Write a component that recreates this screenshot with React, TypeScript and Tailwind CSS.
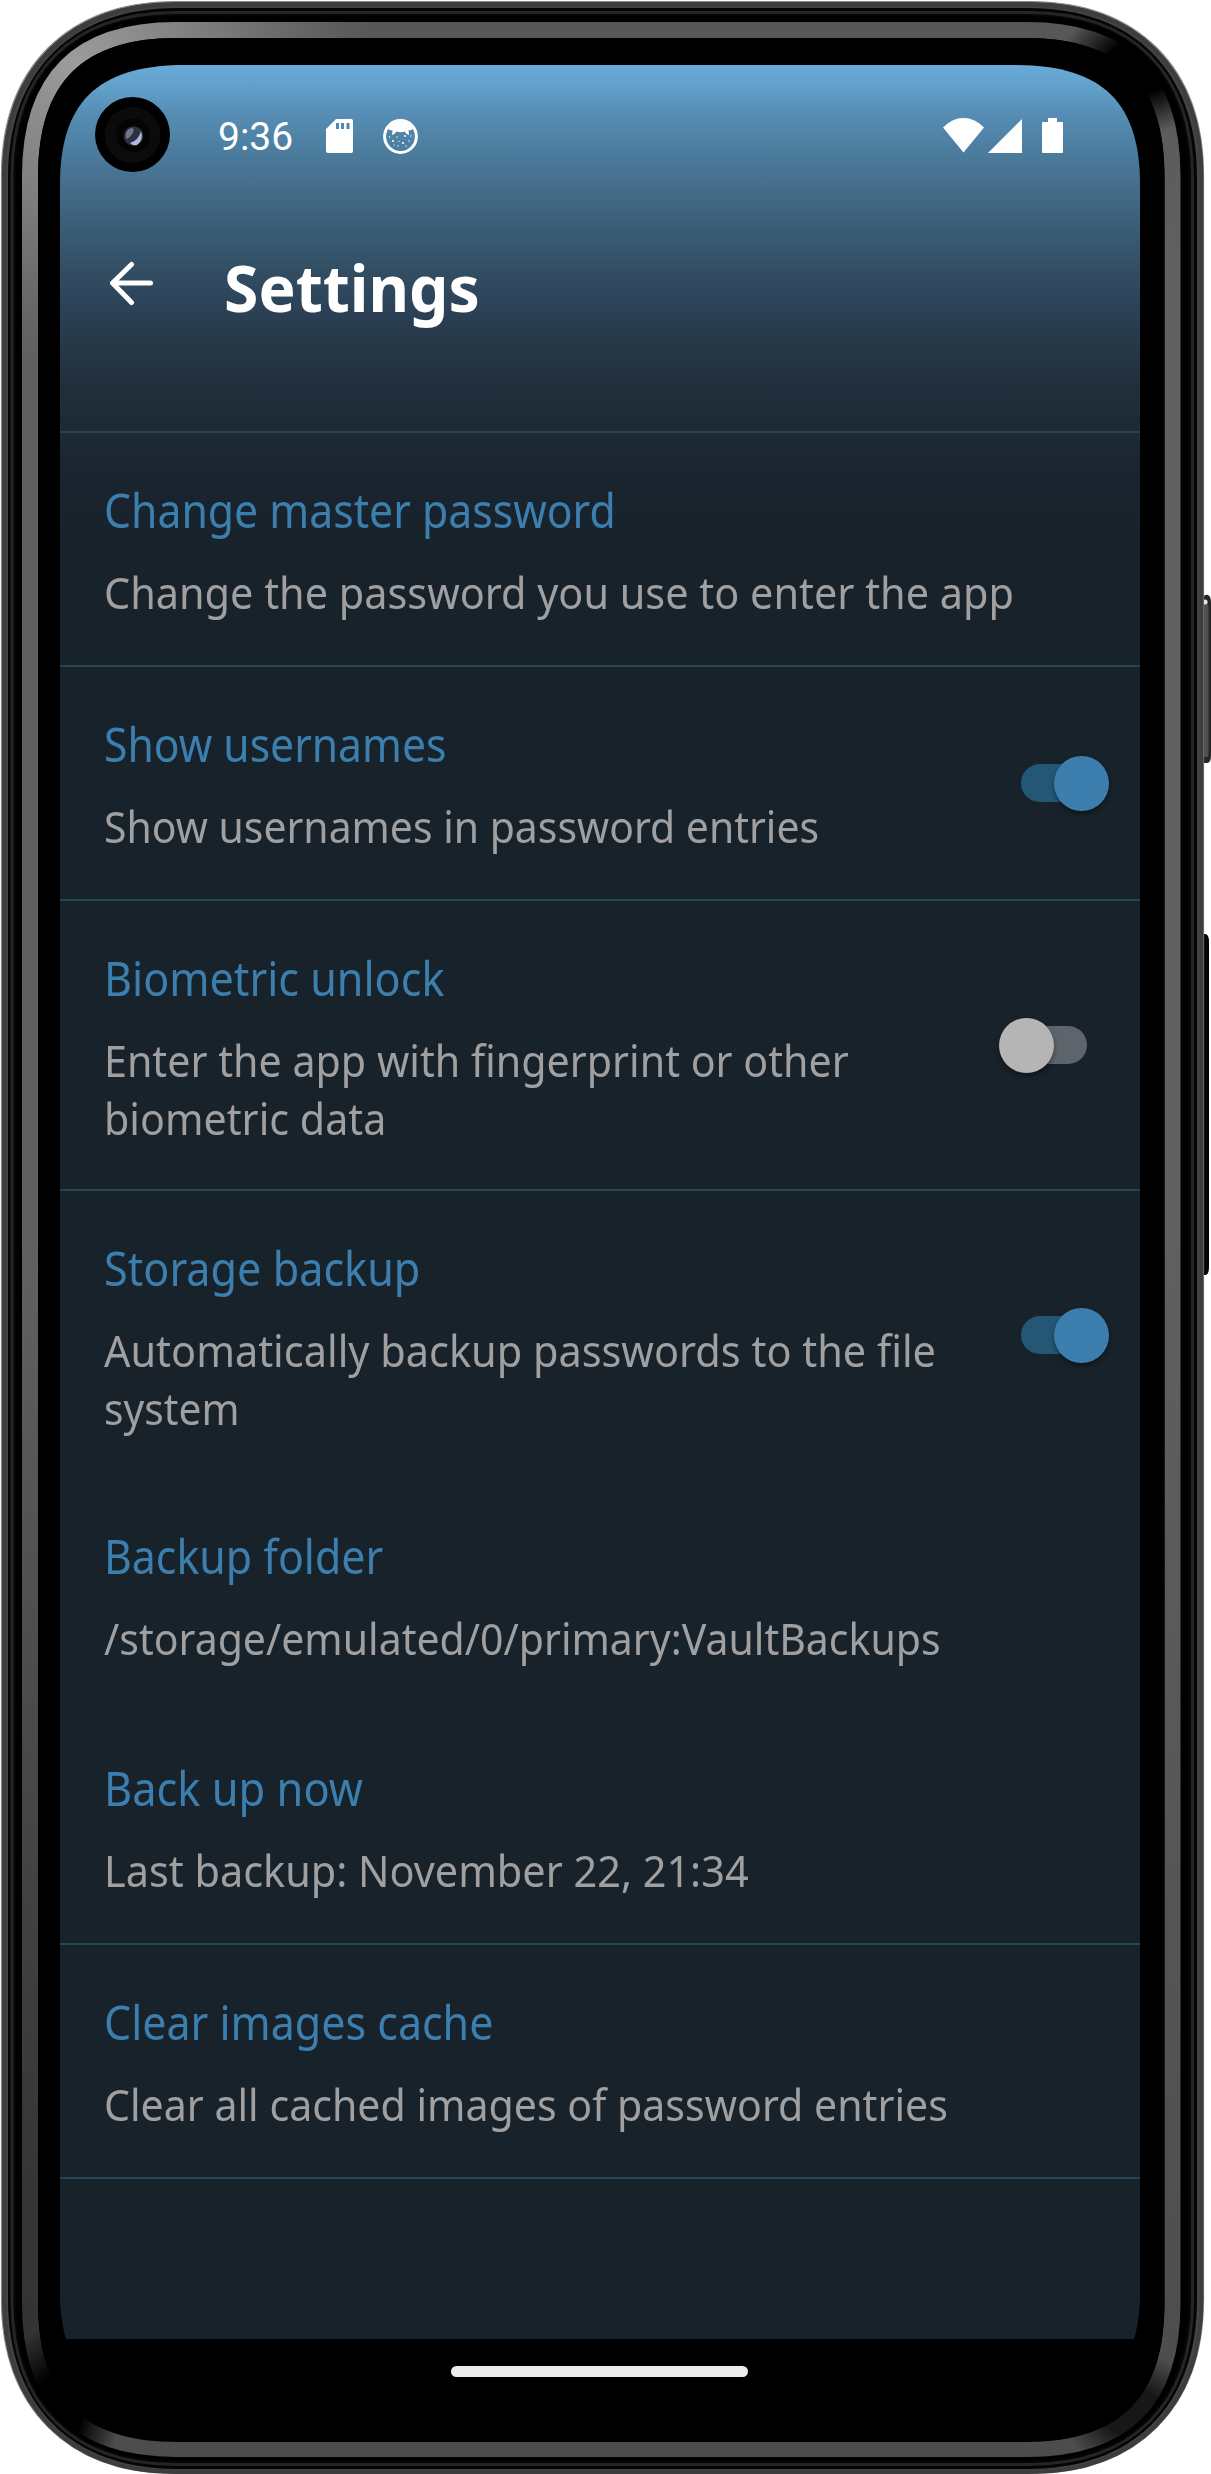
type Row = { title: string; titleScale: string; lines: { text: string; scale: string }[]; on?: boolean };

const groups: Row[][] = [
  [{ title: "Change master password", titleScale: "scale-x-[0.919]", lines: [{ text: "Change the password you use to enter the app", scale: "scale-x-[0.941]" }] }],
  [{ title: "Show usernames", titleScale: "scale-x-[0.917]", lines: [{ text: "Show usernames in password entries", scale: "scale-x-[0.930]" }], on: true }],
  [{
    title: "Biometric unlock", titleScale: "scale-x-[0.927]", on: false,
    lines: [{ text: "Enter the app with fingerprint or other", scale: "scale-x-[0.936]" }, { text: "biometric data", scale: "scale-x-[0.937]" }],
  }],
  [
    {
      title: "Storage backup", titleScale: "scale-x-[0.928]", on: true,
      lines: [{ text: "Automatically backup passwords to the file", scale: "scale-x-[0.942]" }, { text: "system", scale: "scale-x-[0.925]" }],
    },
    { title: "Backup folder", titleScale: "scale-x-[0.921]", lines: [{ text: "/storage/emulated/0/primary:VaultBackups", scale: "scale-x-[0.932]" }] },
    { title: "Back up now", titleScale: "scale-x-[0.933]", lines: [{ text: "Last backup: November 22, 21:34", scale: "scale-x-[0.941]" }] },
  ],
  [{ title: "Clear images cache", titleScale: "scale-x-[0.924]", lines: [{ text: "Clear all cached images of password entries", scale: "scale-x-[0.934]" }] }],
];

function body(l: number, t: number, r: number, b: number, c: number, f: number) {
  const k = c * f;
  return `M${l} ${t + c}C${l} ${t + k} ${l + k} ${t} ${l + c} ${t}H${r - c}C${r - k} ${t} ${r} ${t + k} ${r} ${t + c}V${b - c}C${r} ${b - k} ${r - k} ${b} ${r - c} ${b}H${l + c}C${l + k} ${b} ${l} ${b - k} ${l} ${b - c}Z`;
}

function PhoneFrame() {
  return (
    <svg className="absolute inset-0" width="1211" height="2474" viewBox="0 0 1211 2474" fill="none">
      <defs>
        <linearGradient id="ring" gradientUnits="userSpaceOnUse" x1="0" y1="0" x2="0" y2="2474">
          <stop offset="0" stopColor="#565656" />
          <stop offset="0.1" stopColor="#606060" />
          <stop offset="0.5" stopColor="#606060" />
          <stop offset="1" stopColor="#4c4c4c" />
        </linearGradient>
        <radialGradient id="glow">
          <stop offset="0" stopColor="#a0a0a0" stopOpacity="0.95" />
          <stop offset="0.5" stopColor="#909090" stopOpacity="0.6" />
          <stop offset="1" stopColor="#808080" stopOpacity="0" />
        </radialGradient>
        <radialGradient id="shade">
          <stop offset="0" stopColor="#000" />
          <stop offset="0.4" stopColor="#000" />
          <stop offset="1" stopColor="#000" stopOpacity="0" />
        </radialGradient>
        <mask id="ringMask">
          <path d={body(30, 30, 1172.5, 2449, 146, 0.33)} stroke="#fff" strokeWidth="16" />
        </mask>
        <linearGradient id="leftDim" gradientUnits="userSpaceOnUse" x1="0" y1="1300" x2="0" y2="2400">
          <stop offset="0" stopColor="#000" stopOpacity="0" />
          <stop offset="0.8" stopColor="#000" stopOpacity="0.34" />
        </linearGradient>
      </defs>
      <path d="M1203 600Q1203 594 1208 595Q1211 596 1211 603V755Q1211 763 1207 763H1203Z" fill="#262626" />
      <rect x="1203.5" y="604" width="5" height="153" rx="2.5" fill="#505050" />
      <circle cx="1205" cy="602" r="2.6" fill="#e8e8e8" />
      <path d="M1200 934H1205Q1209 934 1209 942V1267Q1209 1275 1205 1275H1200Z" fill="#050505" />
      <path d={body(1.5, 1.5, 1203.5, 2473.5, 174, 0.38)} fill="#434444" stroke="#8b8c8a" strokeWidth="1.2" />
      <path d={body(4, 4.5, 1201.5, 2472, 172, 0.38)} stroke="#3c3d3d" strokeWidth="4" />
      <path d={body(8, 8, 1197, 2469, 169, 0.375)} fill="#050505" />
      <path d={body(12, 12.5, 1192.5, 2464.5, 164, 0.365)} stroke="#252525" strokeWidth="3" />
      <path d={body(16, 16, 1188, 2460, 160, 0.355)} fill="#000" />
      <g mask="url(#ringMask)">
        <rect width="1211" height="2474" fill="url(#ring)" />
        <rect width="60" height="2474" fill="url(#leftDim)" />
        <circle cx="75" cy="62" r="300" fill="url(#glow)" />
        <ellipse cx="1138" cy="68" rx="80" ry="66" fill="url(#shade)" />
        <ellipse cx="56" cy="2412" rx="64" ry="86" fill="url(#shade)" />
        <ellipse cx="1132" cy="2412" rx="70" ry="60" fill="url(#shade)" fillOpacity="0.7" />
      </g>
      <path d={body(38, 38, 1164.5, 2442, 139, 0.32)} fill="#000" />
    </svg>
  );
}

function Camera() {
  return (
    <svg className="absolute left-[35px] top-[32px]" width="75" height="75" viewBox="0 0 75 75">
      <circle cx="37.5" cy="37.5" r="37.5" fill="#000" />
      <circle cx="37.5" cy="38" r="28" fill="#0b0b0b" />
      <circle cx="38" cy="38" r="17" fill="#040404" />
      <circle cx="38.5" cy="39" r="9.8" fill="#30303e" />
      <path d="M31 42Q29 34 36 31Q41 31 37 37Q35 41 31 42Z" fill="#707891" />
      <path d="M35 46Q44 43 46 34Q49 43 42 48Q38 49 35 46Z" fill="#aebbdd" />
    </svg>
  );
}

function Toggle({ on }: { on: boolean }) {
  return (
    <div className={on ? "relative mr-[31px] h-[55px] w-[88px]" : "relative mr-[53px] h-[55px] w-[88px]"}>
      <div className={on ? "absolute left-0 top-[8.5px] h-[38px] w-[74px] rounded-full bg-[#245776]" : "absolute right-0 top-[8.5px] h-[38px] w-[74px] rounded-full bg-[#5d646b]"} />
      <div className={on ? "absolute right-0 top-0 size-[55px] rounded-full bg-[#3c7fae] shadow-[0_3px_5px_rgba(0,0,0,0.4)]" : "absolute left-0 top-0 size-[55px] rounded-full bg-[#b5b5b5] shadow-[0_3px_5px_rgba(0,0,0,0.4)]"} />
    </div>
  );
}

function SettingRow({ row }: { row: Row }) {
  return (
    <div className="flex items-center justify-between pl-[44px]">
      <div className={row.lines.length > 1 ? "pt-[45px] pb-[42px]" : "pt-[45px] pb-[44px]"}>
        <div className="mb-[21px] h-[64px] text-[46.5px] leading-[64px] whitespace-nowrap text-[#3c7fae]">
          <span className={`inline-block origin-left ${row.titleScale}`}>{row.title}</span>
        </div>
        {row.lines.map((l) => (
          <div key={l.text} className="h-[58px] text-[44px] leading-[58px] whitespace-nowrap text-[#a0a0a0]">
            <span className={`inline-block origin-left ${l.scale}`}>{l.text}</span>
          </div>
        ))}
      </div>
      {row.on !== undefined && <Toggle on={row.on} />}
    </div>
  );
}

function StatusBar() {
  return (
    <div className="relative flex h-[135px] items-start text-white">
      <Camera />
      <span className="mt-[46px] ml-[158px] w-[76px] font-[Roboto] text-[39px] leading-[52px]">9:36</span>
      <svg className="mt-[54px] ml-[32px]" width="27" height="34" viewBox="0 0 27 34">
        <path fillRule="evenodd" fill="#fff" d="M10 0H25Q27 0 27 2V32Q27 34 25 34H2Q0 34 0 32V10ZM10 4V10H13V4ZM15 4V10H18V4ZM20.500 4V10H23.500V4Z" />
      </svg>
      <svg className="mt-[54px] ml-[30px]" width="35" height="35" viewBox="0 0 35 35">
        <circle cx="17.500" cy="17.500" r="15.900" fill="none" stroke="#fff" strokeWidth="3" />
        <path fill="#fff" d="M5 10Q10 2 17.500 2Q25 2 30 10Q27 12 25.500 11L26 16Q23 15 21.500 12.500Q17.500 14 13.500 12.500Q12 15 9 16L9.500 11Q8 12 5 10Z" />
        <g fill="#fff">
          <circle cx="10" cy="22" r="1" /><circle cx="14" cy="18" r=".7" /><circle cx="22" cy="17" r="1" />
          <circle cx="20" cy="24" r="1.100" /><circle cx="26" cy="22" r=".7" /><circle cx="15" cy="27" r=".7" />
          <circle cx="28" cy="17" r=".7" /><circle cx="6.500" cy="18" r=".7" /><circle cx="16" cy="22.500" r=".6" />
          <circle cx="23" cy="27" r=".7" /><circle cx="11" cy="26" r=".6" />
        </g>
      </svg>
      <svg className="mt-[53px] ml-auto" width="41" height="35" viewBox="0 0 41 35">
        <path fill="#fff" d="M20.500 34.500L0 9.500Q9 0 20.500 0T41 9.500Z" />
      </svg>
      <svg className="mt-[53px] ml-[4px]" width="34" height="35" viewBox="0 0 34 35">
        <path fill="#fff" d="M34 1V35H0Z" />
      </svg>
      <svg className="mt-[53px] mr-[77px] ml-[20px]" width="21" height="35" viewBox="0 0 21 35">
        <path fill="#fff" d="M6 0H15V4H20Q21 4 21 5V34Q21 35 20 35H1Q0 35 0 34V5Q0 4 1 4H6Z" />
      </svg>
    </div>
  );
}

export default function App() {
  return (
    <div className="relative h-[2474px] w-[1211px] overflow-hidden bg-white font-['Noto_Sans',sans-serif]">
      <PhoneFrame />
      <div className="relative mt-[65px] ml-[60px] flex h-[2344px] w-[1080px] flex-col bg-black [clip-path:path('M0_120C0_40_35_0_125_0H955C1045_0_1080_40_1080_120V2224C1080_2304_1045_2344_955_2344H125C35_2344_0_2304_0_2224Z')]">
        <div className="h-[2274px] bg-[#18222b] bg-[linear-gradient(180deg,#69aada_0px,#609fc8_25px,#588fb7_45px,#4d7fa2_80px,#456e8a_120px,#3e637e_148px,#375972_175px,#324e63_205px,#2d4359_238px,#273949_275px,#212f3c_322px,#1d2935_368px,#1a242e_420px,#18222b_500px)]">
          <StatusBar />
          <header className="flex h-[231px] items-start text-white">
            <svg className="mt-[61px] ml-[49px]" width="45" height="45" viewBox="0 0 45 45" fill="none" stroke="#fff" strokeWidth="5" strokeLinecap="round" strokeLinejoin="round">
              <path d="M22.500 3.500L3.500 22L22.500 41.500M4 22H41.500" />
            </svg>
            <h1 className="mt-[45px] ml-[70px] origin-left scale-x-[0.975] text-[64px] leading-[86px] font-bold">Settings</h1>
          </header>
          {groups.map((g, i) => (
            <section key={i} className="border-t-2 border-[#294555]">
              {g.map((r) => <SettingRow key={r.title} row={r} />)}
            </section>
          ))}
          <div className="h-[2px] bg-[#294555]" />
        </div>
        <div className="mt-[27px] ml-[391px] h-[11px] w-[297px] rounded-full bg-[#ececec]" />
      </div>
    </div>
  );
}
